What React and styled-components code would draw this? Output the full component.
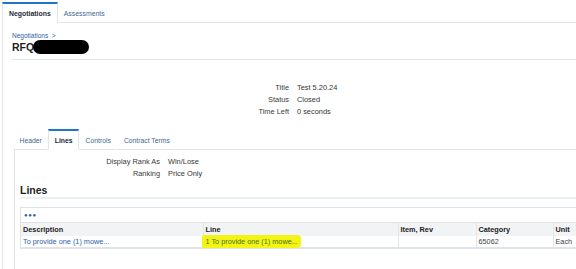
import React from 'react';
import styled, { createGlobalStyle } from 'styled-components';

const Global = createGlobalStyle`
  html, body { margin: 0; padding: 0; background: #fff; }
  body { font-family: "Liberation Sans", Arial, sans-serif; color: #333; overflow: hidden; }
  * { box-sizing: border-box; }
`;

const LINK = '#2d62a8';
const LINE = '#e1e5e9';

const Page = styled.div`
  width: 576px;
  height: 269px;
  padding: 2px 0 0 2px;
  overflow: hidden;
  display: flex;
  flex-direction: column;
`;

const TopTabBar = styled.div`
  display: flex;
  height: 21px;
  flex: none;
`;

const TopTab = styled.div`
  height: 21px;
  display: flex;
  align-items: center;
  padding: 0 6px;
  font-size: 6.9px;
  white-space: nowrap;
  color: ${p => (p.$active ? '#1f2a36' : '#3f6896')};
  font-weight: ${p => (p.$active ? 700 : 400)};
  border-top: ${p => (p.$active ? '2px solid #1f76c8' : '2px solid transparent')};
  border-left: ${p => (p.$active ? `1px solid ${LINE}` : 'none')};
  border-right: ${p => (p.$active ? `1px solid ${LINE}` : 'none')};
  border-bottom: ${p => (p.$active ? 'none' : `1px solid ${LINE}`)};
`;

const TabFiller = styled.div`
  flex: 1;
  border-bottom: 1px solid ${LINE};
`;

const Main = styled.div`
  flex: 1;
  border-left: 1px solid ${LINE};
  padding: 8px 0 0 9px;
  display: flex;
  flex-direction: column;
`;

const PageHeader = styled.div`
  padding-bottom: 5px;
  border-bottom: 1px solid ${LINE};
`;

const Breadcrumb = styled.div`
  font-size: 6.5px;
  line-height: 9px;
  color: ${LINK};
`;

const PageTitle = styled.div`
  display: flex;
  align-items: center;
  height: 14px;
  font-size: 10.5px;
  font-weight: 700;
  color: #1e1e1e;
`;

const Redaction = styled.span`
  display: inline-block;
  width: 56px;
  height: 14px;
  border-radius: 7px;
  background: #000;
  margin-left: -1px;
`;

const InfoGrid = styled.div`
  display: grid;
  grid-template-columns: ${p => p.$labelWidth}px auto;
  column-gap: 8px;
  grid-auto-rows: 12px;
  margin-top: ${p => p.$top}px;
  font-size: 7.4px;
  align-items: center;
`;

const Label = styled.div`
  text-align: right;
  color: #3a3a3a;
  white-space: nowrap;
`;

const Value = styled.div`
  color: #333;
  white-space: nowrap;
`;

const SubTabBar = styled.div`
  display: flex;
  height: 21px;
  margin-top: 12px;
  margin-left: 1px;
`;

const SubTab = styled.div`
  height: 21px;
  display: flex;
  align-items: center;
  padding: 0 5.5px;
  font-size: 6.8px;
  white-space: nowrap;
  color: ${p => (p.$active ? '#1f2a36' : '#3f6896')};
  font-weight: ${p => (p.$active ? 700 : 400)};
  border-top: ${p => (p.$active ? '2px solid #1f76c8' : '2px solid transparent')};
  border-left: ${p => (p.$active ? `1px solid ${LINE}` : '1px solid transparent')};
  border-right: ${p => (p.$active ? `1px solid ${LINE}` : '1px solid transparent')};
  border-bottom: ${p => (p.$active ? '1px solid #fff' : `1px solid ${LINE}`)};
`;

const Panel = styled.div`
  flex: 1;
  margin-left: 2px;
  border-left: 1px solid ${LINE};
  padding: 5px 0 0 5px;
  display: flex;
  flex-direction: column;
`;

const SectionTitle = styled.div`
  margin-top: 4px;
  height: 16px;
  line-height: 15px;
  font-size: 10.5px;
  font-weight: 700;
  color: #222;
  border-bottom: 2px solid #eceff2;
`;

const TableBox = styled.div`
  margin-top: 8px;
  width: 640px;
  border-top: 1px solid #dde2e7;
  border-left: 1px solid #dde2e7;
`;

const Toolbar = styled.div`
  height: 14px;
  display: flex;
  align-items: center;
  padding-left: 3px;
  font-size: 6px;
  letter-spacing: 0.6px;
  color: ${LINK};
`;

const Table = styled.table`
  border-collapse: collapse;
  table-layout: fixed;
  width: 640px;
  font-size: 7.3px;
`;

const Th = styled.th`
  height: 13px;
  padding: 0 2px;
  text-align: left;
  font-weight: 700;
  color: #222;
  background: #f1f3f5;
  border-top: 1px solid #dfe3e8;
  border-right: 1px solid #e2e6ea;
  white-space: nowrap;
`;

const Td = styled.td`
  height: 12px;
  padding: 0 2px;
  color: ${p => (p.$link ? LINK : '#444')};
  border-right: 1px solid #e2e6ea;
  border-bottom: 2px solid #dfe4e9;
  white-space: nowrap;
  overflow: visible;
`;

const Highlight = styled.span`
  display: inline-block;
  margin: -2px 0 -2px -4px;
  padding: 2px 3px 2px 4px;
  background: #f4f414;
  color: #47741f;
  border-radius: 2px 4px 4px 2px;
`;

const columns = [
  { name: 'Description', width: 182 },
  { name: 'Line', width: 195 },
  { name: 'Item, Rev', width: 78 },
  { name: 'Category', width: 77 },
  { name: 'Unit', width: 108 },
];

export default function App() {
  return (
    <>
      <Global />
      <Page>
        <TopTabBar>
          <TopTab $active>Negotiations</TopTab>
          <TopTab>Assessments</TopTab>
          <TabFiller />
        </TopTabBar>
        <Main>
          <PageHeader>
            <Breadcrumb>Negotiations &nbsp;&gt;</Breadcrumb>
            <PageTitle>
              RFQ
              <Redaction />
            </PageTitle>
          </PageHeader>
          <InfoGrid $labelWidth={277} $top={21}>
            <Label>Title</Label>
            <Value>Test 5.20.24</Value>
            <Label>Status</Label>
            <Value>Closed</Value>
            <Label>Time Left</Label>
            <Value>0 seconds</Value>
          </InfoGrid>
          <SubTabBar>
            <SubTab>Header</SubTab>
            <SubTab $active>Lines</SubTab>
            <SubTab>Controls</SubTab>
            <SubTab>Contract Terms</SubTab>
            <TabFiller />
          </SubTabBar>
          <Panel>
            <InfoGrid $labelWidth={140} $top={0}>
              <Label>Display Rank As</Label>
              <Value>Win/Lose</Value>
              <Label>Ranking</Label>
              <Value>Price Only</Value>
            </InfoGrid>
            <SectionTitle>Lines</SectionTitle>
            <TableBox>
              <Toolbar>●●●</Toolbar>
              <Table>
                <colgroup>
                  {columns.map(c => (
                    <col key={c.name} style={{ width: c.width }} />
                  ))}
                </colgroup>
                <thead>
                  <tr>
                    {columns.map(c => (
                      <Th key={c.name}>{c.name}</Th>
                    ))}
                  </tr>
                </thead>
                <tbody>
                  <tr>
                    <Td $link>To provide one (1) mowe...</Td>
                    <Td $link>
                      <Highlight>1 To provide one (1) mowe...</Highlight>
                    </Td>
                    <Td></Td>
                    <Td>65062</Td>
                    <Td>Each</Td>
                  </tr>
                </tbody>
              </Table>
            </TableBox>
          </Panel>
        </Main>
      </Page>
    </>
  );
}
